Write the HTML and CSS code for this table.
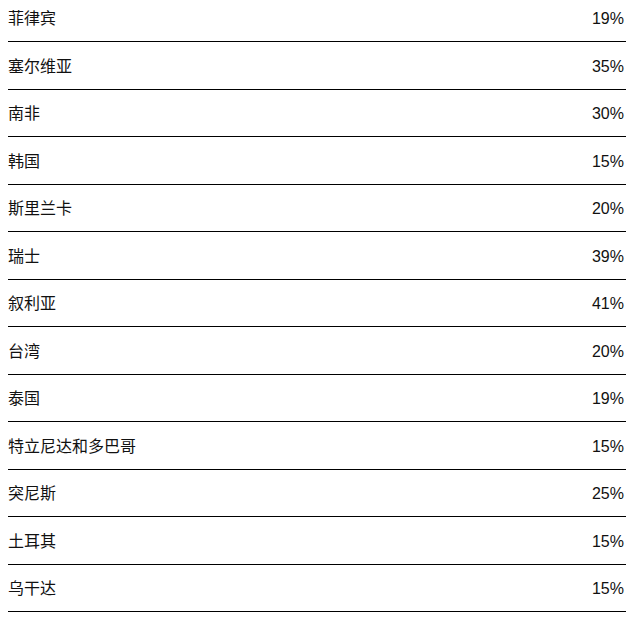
FILE: index.html
```html
<!DOCTYPE html>
<html lang="zh">
<head>
<meta charset="utf-8">
<link rel="stylesheet" href="styles.css">
</head>
<body>
<div class="list">
  <div class="row"><span class="name">菲律宾</span><span class="val">19%</span></div>
  <div class="row"><span class="name">塞尔维亚</span><span class="val">35%</span></div>
  <div class="row"><span class="name">南非</span><span class="val">30%</span></div>
  <div class="row"><span class="name">韩国</span><span class="val">15%</span></div>
  <div class="row"><span class="name">斯里兰卡</span><span class="val">20%</span></div>
  <div class="row"><span class="name">瑞士</span><span class="val">39%</span></div>
  <div class="row"><span class="name">叙利亚</span><span class="val">41%</span></div>
  <div class="row"><span class="name">台湾</span><span class="val">20%</span></div>
  <div class="row"><span class="name">泰国</span><span class="val">19%</span></div>
  <div class="row"><span class="name">特立尼达和多巴哥</span><span class="val">15%</span></div>
  <div class="row"><span class="name">突尼斯</span><span class="val">25%</span></div>
  <div class="row"><span class="name">土耳其</span><span class="val">15%</span></div>
  <div class="row"><span class="name">乌干达</span><span class="val">15%</span></div>
</div>
</body>
</html>
```
FILE: styles.css
```css
html, body {
  margin: 0;
  padding: 0;
  background: #fff;
}
body {
  font-family: "Liberation Sans", "Noto Sans CJK SC", Arial, sans-serif;
  font-size: 16px;
  color: #111;
  overflow: hidden;
}
.list {
  margin: -5.5px 0 0 8px;
  width: 618px;
}
.row {
  display: flex;
  justify-content: space-between;
  align-items: center;
  line-height: 24px;
  padding: 12.75px 2px 9.75px 0;
  border-bottom: 1px solid #000;
}
```
